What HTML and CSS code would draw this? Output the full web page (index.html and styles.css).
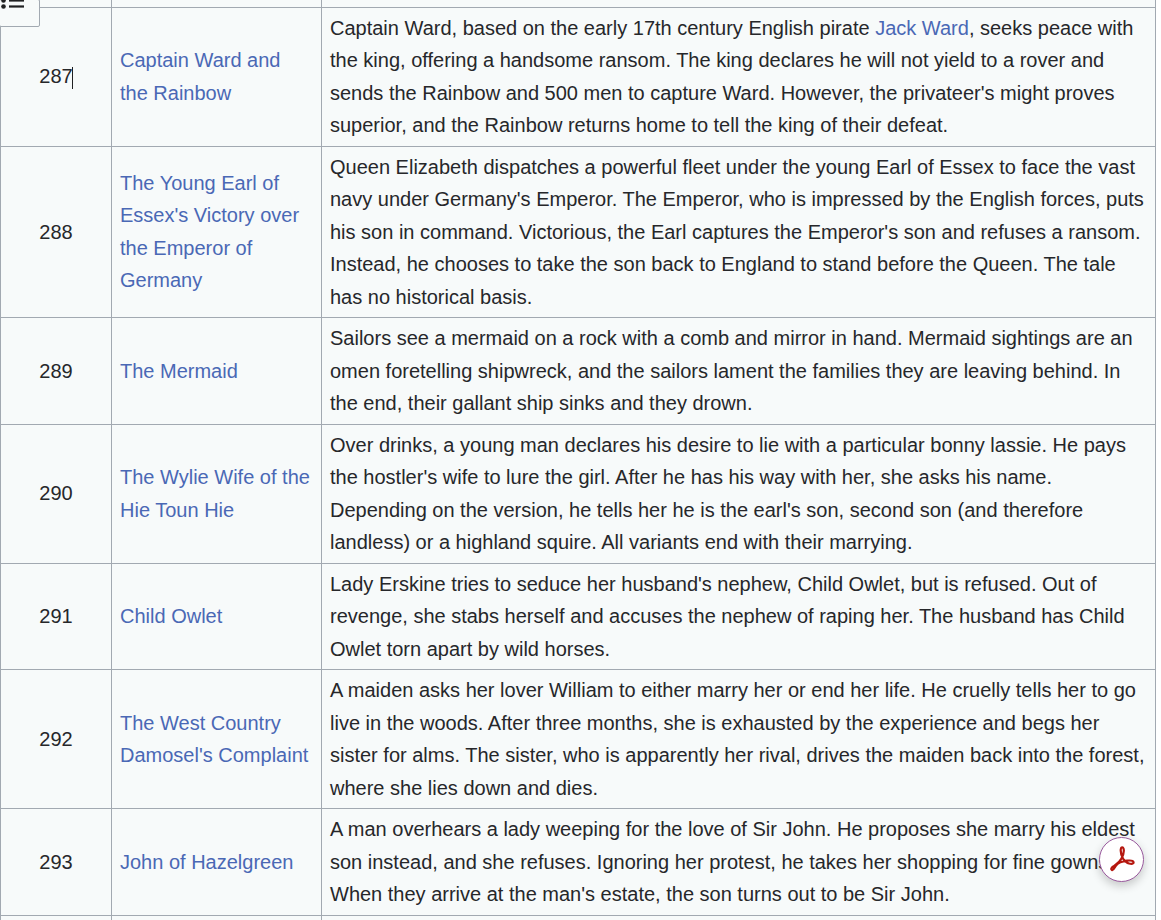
FILE: index.html
```html
<!DOCTYPE html>
<html lang="en">
<head>
  <meta charset="UTF-8">
  <meta name="viewport" content="width=device-width, initial-scale=1.0">
  <title>Child Ballads</title>
  <link rel="stylesheet" href="styles.css">
</head>
<body>
  <!-- contents toggle, stuck to the top left corner -->
  <button type="button" class="toc-btn" aria-label="Contents">
    <svg width="26" height="26" viewBox="0 0 26 26">
      <circle cx="3.500" cy="0.500" r="2.300"></circle>
      <rect x="9" y="-0.600" width="15" height="2.200"></rect>
      <circle cx="3.500" cy="6.500" r="2.300"></circle>
      <rect x="9" y="5.400" width="15" height="2.200"></rect>
    </svg>
  </button>
  <table class="ballads">
    <colgroup>
      <col class="col-num">
      <col class="col-title">
      <col class="col-desc">
    </colgroup>
    <tr class="row-cut-top">
      <td></td><td></td><td></td>
    </tr>
    <tr>
      <td class="num"><span class="caret">287</span></td>
      <td><a href="#">Captain Ward and the Rainbow</a></td>
      <td>Captain Ward, based on the early 17th century English pirate <a href="#">Jack Ward</a>, seeks peace with the king, offering a handsome ransom. The king declares he will not yield to a rover and sends the Rainbow and 500 men to capture Ward. However, the privateer's might proves superior, and the Rainbow returns home to tell the king of their defeat.</td>
    </tr>
    <tr>
      <td class="num">288</td>
      <td><a href="#">The Young Earl of Essex's Victory over the Emperor of Germany</a></td>
      <td>Queen Elizabeth dispatches a powerful fleet under the young Earl of Essex to face the vast navy under Germany's Emperor. The Emperor, who is impressed by the English forces, puts his son in command. Victorious, the Earl captures the Emperor's son and refuses a ransom. Instead, he chooses to take the son back to England to stand before the Queen. The tale has no historical basis.</td>
    </tr>
    <tr>
      <td class="num">289</td>
      <td><a href="#">The Mermaid</a></td>
      <td>Sailors see a mermaid on a rock with a comb and mirror in hand. Mermaid sightings are an omen foretelling shipwreck, and the sailors lament the families they are leaving behind. In the end, their gallant ship sinks and they drown.</td>
    </tr>
    <tr>
      <td class="num">290</td>
      <td><a href="#">The Wylie Wife of the Hie Toun Hie</a></td>
      <td>Over drinks, a young man declares his desire to lie with a particular bonny lassie. He pays the hostler's wife to lure the girl. After he has his way with her, she asks his name. Depending on the version, he tells her he is the earl's son, second son (and therefore landless) or a highland squire. All variants end with their marrying.</td>
    </tr>
    <tr>
      <td class="num">291</td>
      <td><a href="#">Child Owlet</a></td>
      <td>Lady Erskine tries to seduce her husband's nephew, Child Owlet, but is refused. Out of revenge, she stabs herself and accuses the nephew of raping her. The husband has Child Owlet torn apart by wild horses.</td>
    </tr>
    <tr>
      <td class="num">292</td>
      <td><a href="#">The West Country Damosel's Complaint</a></td>
      <td>A maiden asks her lover William to either marry her or end her life. He cruelly tells her to go live in the woods. After three months, she is exhausted by the experience and begs her sister for alms. The sister, who is apparently her rival, drives the maiden back into the forest, where she lies down and dies.</td>
    </tr>
    <tr>
      <td class="num">293</td>
      <td><a href="#">John of Hazelgreen</a></td>
      <td>A man overhears a lady weeping for the love of Sir John. He proposes she marry his eldest son instead, and she refuses. Ignoring her protest, he takes her shopping for fine gowns. When they arrive at the man's estate, the son turns out to be Sir John.</td>
    </tr>
    <tr class="row-cut-bottom">
      <td></td><td></td><td></td>
    </tr>
  </table>
  <!-- floating pdf button -->
  <button type="button" class="pdf-btn" aria-label="Download PDF">
    <svg class="pdf-icon" width="25" height="26" viewBox="0 0 25 26" fill="none">
      <path d="M2 24C0.500 23 1.500 21.500 4 20C7 18 9.500 16.500 11.500 12.500C13.300 9 14.500 5.500 13.500 2.500C13 1 11 1 10.800 3C10.500 6 11.300 10 13.300 13C14.800 15.300 16.500 17 19 17.500C21.500 18 24 18 23.500 16C23 14.500 20 14.300 17 14.700C13 15.200 8 17 6 19.500C4.500 21.500 3.500 24.800 2 24Z" stroke="#b5170f" stroke-width="2.200" stroke-linejoin="round"></path>
    </svg>
  </button>
</body>
</html>
```

FILE: styles.css
```css
* {
  box-sizing: border-box;
}
html, body {
  height: 920px;
  overflow: hidden;
}
body {
  font-family: "Liberation Sans", Arial, sans-serif;
  font-size: 20px;
  line-height: 32.5px;
  color: #26272a;
  background-color: #fff;
  margin: 0;
}
a {
  color: #4a68b5;
  text-decoration: none;
}
.ballads {
  width: 1156px;
  table-layout: fixed;
  border-collapse: collapse;
  background-color: #f7fafa;
}
.col-num {
  width: 111px;
}
.col-title {
  width: 210px;
}
.ballads td {
  border: 1px solid #a2a9b1;
  padding: 4px 8px;
  vertical-align: middle;
}
.ballads .num {
  text-align: center;
}
.ballads .row-cut-top td {
  padding: 0;
  height: 7px;
  border-top: none;
}
.ballads .row-cut-bottom td {
  padding: 0;
  height: 30px;
}
.caret {
  position: relative;
}
.caret::after {
  content: "";
  position: absolute;
  right: 0;
  top: 2px;
  width: 1px;
  height: 22px;
  background-color: #202122;
}
.toc-btn {
  position: absolute;
  left: -1px;
  top: -1px;
  width: 41px;
  height: 28px;
  padding: 0;
  background-color: #f7fafa;
  border: 1px solid #a2a9b1;
  border-radius: 2px;
  overflow: hidden;
}
.toc-btn svg {
  display: block;
  fill: #202122;
  overflow: visible;
}
.pdf-btn {
  position: absolute;
  left: 1099px;
  top: 837px;
  width: 45px;
  height: 45px;
  padding: 0;
  background-color: #fff;
  border: 1px solid #9a5a9e;
  border-radius: 50%;
  box-shadow: 0 4px 10px rgba(0, 0, 0, 0.2);
  display: flex;
  align-items: center;
  justify-content: center;
}
.pdf-icon {
  margin: -2px 0 0 1px;
}
```
